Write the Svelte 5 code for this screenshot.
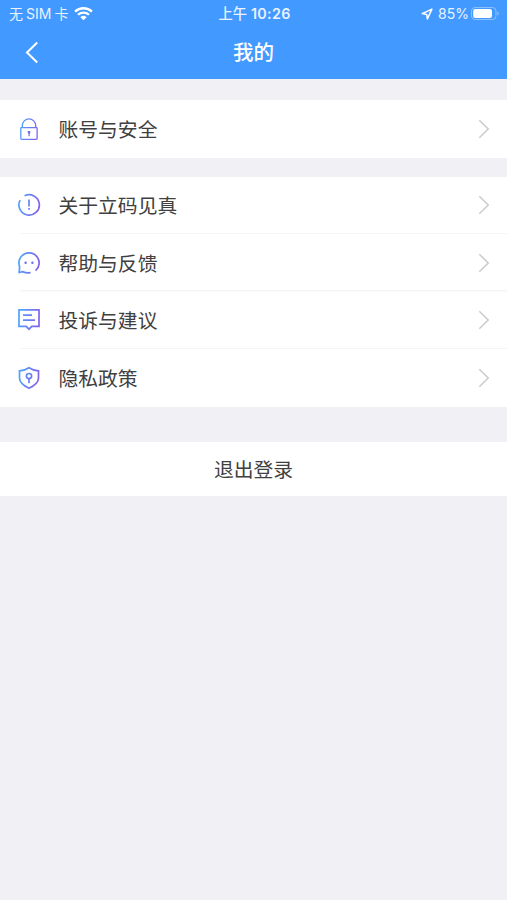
<script lang="ts">
	type Item = { label: string; icon: string };

	const groups: Item[][] = [
		[{ label: '账号与安全', icon: 'lock' }],
		[
			{ label: '关于立码见真', icon: 'about' },
			{ label: '帮助与反馈', icon: 'help' },
			{ label: '投诉与建议', icon: 'suggest' },
			{ label: '隐私政策', icon: 'privacy' }
		]
	];
</script>

<div class="screen">
	<header>
		<div class="status">
			<div class="carrier">
				<span>无</span><span class="sim">SIM</span><span>卡</span>
				<svg class="wifi" width="19" height="15" viewBox="0 0 18 14">
					<path d="M1 5.2a11.6 11.6 0 0 1 16 0" />
					<path d="M3.8 8.2a7.6 7.6 0 0 1 10.4 0" />
					<path class="solid" d="M9 13.4 6 10.5a4.4 4.4 0 0 1 6 0z" />
				</svg>
			</div>
			<div class="time">上午<b>10:26</b></div>
			<div class="power">
				<svg width="12" height="12" viewBox="0 0 12 12">
					<path class="line" d="M10.9 1.1 1.2 5.6l4.5.8.7 4.5z" />
				</svg>
				<span>85%</span>
				<svg width="29" height="13" viewBox="0 0 29 13">
					<rect class="shell" x=".5" y=".5" width="24.5" height="12" rx="3.6" />
					<rect class="charge" x="2.2" y="2" width="18.8" height="9" rx="2" />
					<path class="cap" d="M26.5 4.4c1.8.7 1.8 3.5 0 4.2z" />
				</svg>
			</div>
		</div>
		<nav>
			<button class="back" aria-label="返回">
				<svg width="14" height="23" viewBox="0 0 14 23">
					<path d="M12.2 1.5 2 11.5l10.2 10" />
				</svg>
			</button>
			<h1>我的</h1>
		</nav>
	</header>

	<svg class="defs" width="0" height="0">
		<linearGradient id="tint" gradientUnits="userSpaceOnUse" x1="2" y1="10" x2="22" y2="14">
			<stop offset="0" stop-color="#4fa3fb" />
			<stop offset="1" stop-color="#8560ec" />
		</linearGradient>
	</svg>

	{#each groups as group}
		<ul>
			{#each group as item}
				<li>
					<svg class="icon" width="24" height="24" viewBox="0 0 24 24">
						{#if item.icon === 'lock'}
							<g class="thin">
								<rect x="3.8" y="10.6" width="16.3" height="11.7" rx=".7" />
								<path d="M5.3 10.4V8.6a6.7 6.7 0 0 1 13.4 0v1.8" />
								<path class="dot" d="M10.8 14.1h2.4v1.8l-.5.9v2.4h-1.2v-2.4l-.7-.9z" />
							</g>
						{:else if item.icon === 'about'}
							<path d="M7.6 2.8A10.2 10.2 0 1 1 3.1 7.2" />
							<path d="M12 6.6v7" />
							<path d="M12 15.1v1.7" />
						{:else if item.icon === 'help'}
							<path d="M18.6 19.6A10.1 10.1 0 1 0 2.6 15.6L2.2 21.5l3.4-.9q3.8 1.7 8 1.1" />
							<circle class="dot" cx="8.6" cy="11.8" r="1.2" />
							<circle class="dot" cx="15.4" cy="11.8" r="1.2" />
						{:else if item.icon === 'suggest'}
							<path d="M2 1.8h20v16.6h-7.2L12 21.2l-2.8-2.8H2z" />
							<path d="M6 7.2h9M6 12.2h12" />
						{:else}
							<path
								d="M12 1.8q4.2 2.8 9.5 3.1v7.2c0 5-4.8 8-9.5 10.2-4.7-2.2-9.5-5.2-9.5-10.2V4.9Q7.8 4.6 12 1.8z"
							/>
							<circle cx="12" cy="10.1" r="2.6" />
							<path d="M12 12.7v4.5" />
						{/if}
					</svg>
					<span>{item.label}</span>
					<svg class="arrow" width="12" height="20" viewBox="0 0 12 20">
						<path d="M1.3 1.2 10.2 10l-8.9 8.8" />
					</svg>
				</li>
			{/each}
		</ul>
	{/each}

	<button class="logout">退出登录</button>
</div>

<style>
	:global(body) {
		background: #f0f0f5;
	}

	.screen {
		min-height: 900px;
		background: #f0f0f5;
		font-family: 'Liberation Sans', 'Noto Sans CJK SC', sans-serif;
		color: #404040;
	}

	header {
		height: 79px;
		margin-bottom: 21px;
		background: #4299ff;
		color: #fff;
	}

	svg {
		display: block;
		flex: none;
		fill: none;
	}

	.defs {
		height: 0;
	}

	.status {
		display: grid;
		grid-template-columns: 1fr auto 1fr;
		align-items: center;
		height: 27px;
		padding: 0 7px 0 9px;
		font-family: Inter, 'Noto Sans CJK SC', sans-serif;
		font-size: 14px;
		line-height: 27px;
		color: #e8f3ff;
	}

	.carrier,
	.time,
	.power {
		display: flex;
		align-items: center;
	}

	.sim {
		margin: 0 3px;
	}

	.wifi {
		margin: -1px 0 0 6px;
		stroke: #fff;
		stroke-width: 2.2;
	}

	.wifi .solid {
		fill: #fff;
		stroke: none;
	}

	.time {
		gap: 4px;
		font-size: 14.3px;
		font-weight: 500;
	}

	.time b {
		font-weight: 600;
		letter-spacing: 0.3px;
	}

	.power {
		justify-content: flex-end;
		gap: 5px;
	}

	.power span {
		margin-right: -3px;
	}

	.line {
		stroke: #fff;
		stroke-width: 1.5;
		stroke-linejoin: round;
	}

	.shell {
		stroke: #8cc1ff;
	}

	.charge {
		fill: #fff;
	}

	.cap {
		fill: #8cc1ff;
	}

	nav {
		display: grid;
		grid-template-columns: 60px 1fr 60px;
		align-items: center;
		height: 50px;
	}

	button {
		border: 0;
		font-family: inherit;
		color: inherit;
	}

	.back {
		padding: 0 0 0 25px;
		background: none;
		stroke: #fff;
		stroke-width: 2;
	}

	h1 {
		margin: 0;
		padding-top: 2px;
		font-size: 20.5px;
		font-weight: 500;
		line-height: 30px;
		text-align: center;
	}

	ul {
		margin: 0 0 19px;
		padding: 0;
		list-style: none;
		background: #fff;
	}

	li {
		display: flex;
		align-items: center;
		height: 57.5px;
		padding: 0 17.5px 0 17px;
		background: linear-gradient(#f5f5f7, #f5f5f7) 20px 100% / 100% 1.5px no-repeat;
	}

	li:last-child {
		background: none;
	}

	li span {
		flex: 1;
		margin-left: 17.5px;
		padding-top: 2px;
		font-size: 19.8px;
		line-height: 30px;
	}

	.icon {
		stroke: url(#tint);
		stroke-width: 1.7;
	}

	.thin {
		stroke-width: 1.3;
	}

	.dot {
		fill: #6c6cf0;
		stroke: none;
	}

	.arrow {
		stroke: #ccc;
		stroke-width: 1.6;
	}

	.logout {
		display: block;
		width: 100%;
		height: 54px;
		margin-top: 35.5px;
		padding: 0 0 1px;
		background: #fff;
		font-size: 19.8px;
	}
</style>
